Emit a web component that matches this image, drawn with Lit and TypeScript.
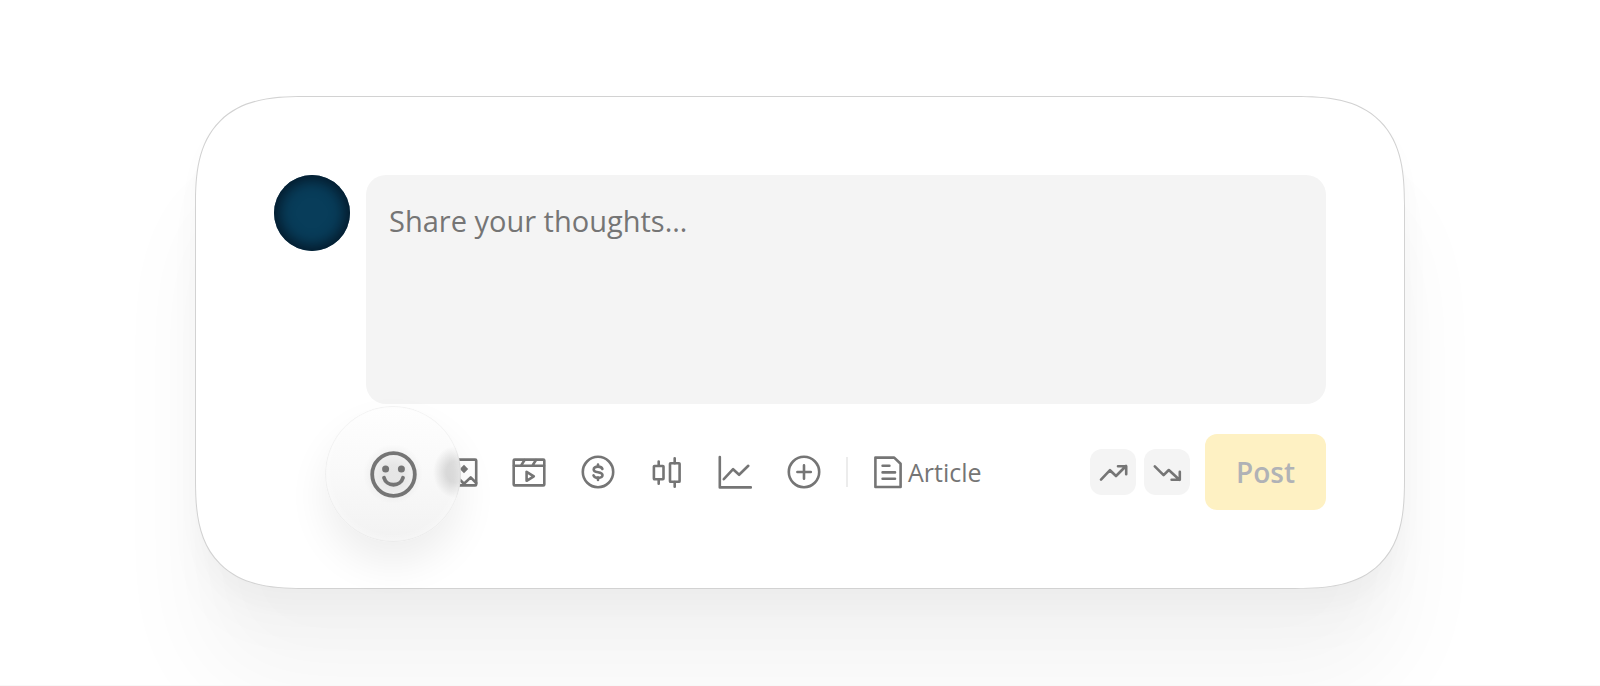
import { LitElement, html, css, svg } from "lit";
import { customElement, state } from "lit/decorators.js";

const frame = (body: unknown, size = 36) => html`
  <svg width=${size} height=${size} viewBox="0 0 ${size} ${size}" aria-hidden="true">${body}</svg>
`;

const smileLarge = svg`
  <circle cx="23.5" cy="23.5" r="21.3" stroke-width="3.8"/>
  <circle class="solid" cx="15.6" cy="18" r="3.5"/>
  <circle class="solid" cx="31.4" cy="18" r="3.5"/>
  <path stroke-width="3.8" d="M14 26.8a9.8 9.2 0 0 0 19 0"/>`;

const picture = svg`
  <rect x="3" y="5.6" width="30.2" height="25.8" rx="1"/>
  <path class="solid" d="M21 10.8l4.2 4.2-4.2 4.2-4.2-4.2z"/>
  <path d="M3 28l8-8 10 9.8 6.7-6.4 5.5 5.6"/>`;

const video = svg`
  <rect x="2.7" y="5.6" width="30.6" height="25.8" rx="1"/>
  <path d="M3 11.8h30M10 11.6l3.6-5.6M21.4 11.6L25 6"/>
  <path d="M15.6 17.8v9l7.2-4.5z"/>`;

const dollar = svg`
  <circle cx="18" cy="18" r="15.2"/>
  <path d="M18 10.6v2.2M18 23.6v2.4"/>
  <path d="M22.4 15c-.5-1.5-2.2-2.4-4.4-2.4-2.6 0-4.3 1.1-4.3 2.8 0 1.9 1.8 2.4 4.3 2.8 2.6.4 4.5 1 4.5 2.9 0 1.7-1.8 2.8-4.4 2.8-2.4 0-4.1-1-4.6-2.5"/>`;

const candles = svg`
  <path d="M9.7 7.5v4.2M9.7 25.4v4.4M25.7 4.2v5M25.7 28v4.8"/>
  <rect x="4.9" y="12" width="9.6" height="13.2" rx=".6"/>
  <rect x="21" y="9.2" width="9.6" height="18.6" rx=".6"/>`;

const chart = svg`
  <path d="M2.8 3v30.4h31"/>
  <path d="M6.8 25.2l9.3-10 6 5.6 9.2-9"/>`;

const plus = svg`
  <circle cx="18" cy="18" r="15.2"/>
  <path d="M11.4 18h13.4M18 11.4v13.4"/>`;

const page = svg`
  <path d="M5.4 3.6h18.8l6.4 6.2v23.2H5.4z"/>
  <path d="M12.6 11.8h6.8M12.6 18.4H25M12.6 24.8H25"/>`;

const trendUp = svg`<path d="M11 30.6l9-9.4 6 5.8 10-10M28 17.2h8.2v8"/>`;
const trendDown = svg`<path d="M10.8 17.4l8.8 8.8 5.2-5.2 10.6 9.8M27.6 30.8h8.2v-8"/>`;

const TOOLS = [
  { label: "Image", icon: picture },
  { label: "Video", icon: video },
  { label: "Cashtag", icon: dollar },
  { label: "Candlestick chart", icon: candles },
  { label: "Line chart", icon: chart },
  { label: "More", icon: plus },
];

@customElement("app-root")
export class AppRoot extends LitElement {
  @state() private text = "";

  static styles = css`
    :host {
      display: block;
      font-family: "Open Sans", "Noto Sans", sans-serif;
      color: #757575;
    }
    * {
      box-sizing: border-box;
    }
    .page {
      min-height: 100vh;
      display: flex;
      align-items: center;
      justify-content: center;
      padding: 48px 24px;
      background: #fff;
      border-bottom: 1px solid #f8f8f8;
      overflow: hidden;
    }
    .card {
      width: 100%;
      max-width: 1210px;
      padding: 78px;
      display: grid;
      grid-template-columns: 76px minmax(0, 1fr);
      column-gap: 16px;
      row-gap: 30px;
      background: #fff;
      border: 1px solid #d2d2d2;
      border-radius: 86px;
      box-shadow:
        0 16px 24px rgba(0, 0, 0, 0.024),
        0 44px 44px rgba(0, 0, 0, 0.02),
        0 100px 96px rgba(0, 0, 0, 0.038);
    }
    @supports (corner-shape: squircle) {
      .card {
        border-radius: 110px;
        corner-shape: superellipse(1.45);
      }
    }
    .avatar {
      width: 76px;
      height: 76px;
      border-radius: 50%;
      background: #083d5a;
      box-shadow: inset 0 0 14px 5px #04192a;
    }
    .thoughts {
      display: block;
      width: 100%;
      height: 229px;
      margin: 0;
      padding: 28px 23px;
      border: 0;
      border-radius: 20px;
      outline: none;
      resize: none;
      background: #f4f4f4;
      color: #333;
      font: 400 29px/36px "Open Sans", "Noto Sans", sans-serif;
    }
    .thoughts::placeholder {
      color: #757575;
      opacity: 1;
    }
    .toolbar {
      grid-column: 2;
      display: flex;
      align-items: center;
      min-height: 76px;
      padding-left: 8px;
    }
    .tools {
      width: 448px;
      display: flex;
      justify-content: space-between;
    }
    button {
      font: inherit;
      color: inherit;
      padding: 0;
      border: 0;
      background: none;
      cursor: pointer;
    }
    svg {
      display: block;
      fill: none;
      stroke: currentColor;
      stroke-width: 2.6;
      stroke-linecap: round;
      stroke-linejoin: round;
    }
    .solid {
      fill: currentColor;
      stroke: none;
    }
    .tool {
      width: 36px;
      height: 36px;
    }
    .emoji {
      position: relative;
      z-index: 1;
    }
    .lens {
      position: absolute;
      top: -48px;
      left: -49px;
      width: 136px;
      height: 136px;
      display: grid;
      place-items: center;
      border-radius: 50%;
      background:
        radial-gradient(22px 26px at 130px 66px, rgba(0, 0, 0, 0.13) 40%, transparent),
        radial-gradient(circle 30px at center, rgba(0, 0, 0, 0.08) 30%, transparent),
        linear-gradient(#fefefe, #f9f9f9 50%, #f2f2f2);
      box-shadow:
        inset 0 0 1px 1px rgba(0, 0, 0, 0.05),
        inset 0 0 10px 2px rgba(255, 255, 255, 0.5),
        0 22px 40px rgba(0, 0, 0, 0.07);
    }
    .divider {
      width: 2px;
      height: 30px;
      margin: 0 22px 0 24px;
      background: #ececec;
    }
    .article {
      display: flex;
      align-items: center;
      gap: 2px;
      color: inherit;
      text-decoration: none;
      font-size: 25px;
      line-height: 36px;
    }
    .actions {
      margin-left: auto;
      display: flex;
      align-items: center;
      gap: 8px;
    }
    .trend {
      width: 46px;
      height: 46px;
      border-radius: 12px;
      background: #f4f4f4;
    }
    .post {
      width: 121px;
      height: 76px;
      margin-left: 7px;
      border-radius: 12px;
      background: #fef1c3;
      color: #b0b2b6;
      font-size: 28px;
      font-weight: 600;
    }
  `;

  private onInput(e: Event) {
    this.text = (e.target as HTMLTextAreaElement).value;
  }

  render() {
    return html`
      <main class="page">
        <form class="card" @submit=${(e: Event) => e.preventDefault()}>
          <div class="avatar" role="img" aria-label="Your avatar"></div>
          <textarea
            class="thoughts"
            aria-label="Share your thoughts"
            placeholder="Share your thoughts…"
            .value=${this.text}
            @input=${this.onInput}
          ></textarea>
          <div class="toolbar">
            <div class="tools">
              <button class="tool emoji" type="button" aria-label="Emoji">
                <span class="lens">${frame(smileLarge, 47)}</span>
              </button>
              ${TOOLS.map(
                (t) => html`<button class="tool" type="button" aria-label=${t.label}>${frame(t.icon)}</button>`
              )}
            </div>
            <span class="divider"></span>
            <a class="article" href="#article">${frame(page)}<span>Article</span></a>
            <div class="actions">
              <button class="trend" type="button" aria-label="Bullish">${frame(trendUp, 46)}</button>
              <button class="trend" type="button" aria-label="Bearish">${frame(trendDown, 46)}</button>
              <button class="post" type="submit">Post</button>
            </div>
          </div>
        </form>
      </main>
    `;
  }
}
